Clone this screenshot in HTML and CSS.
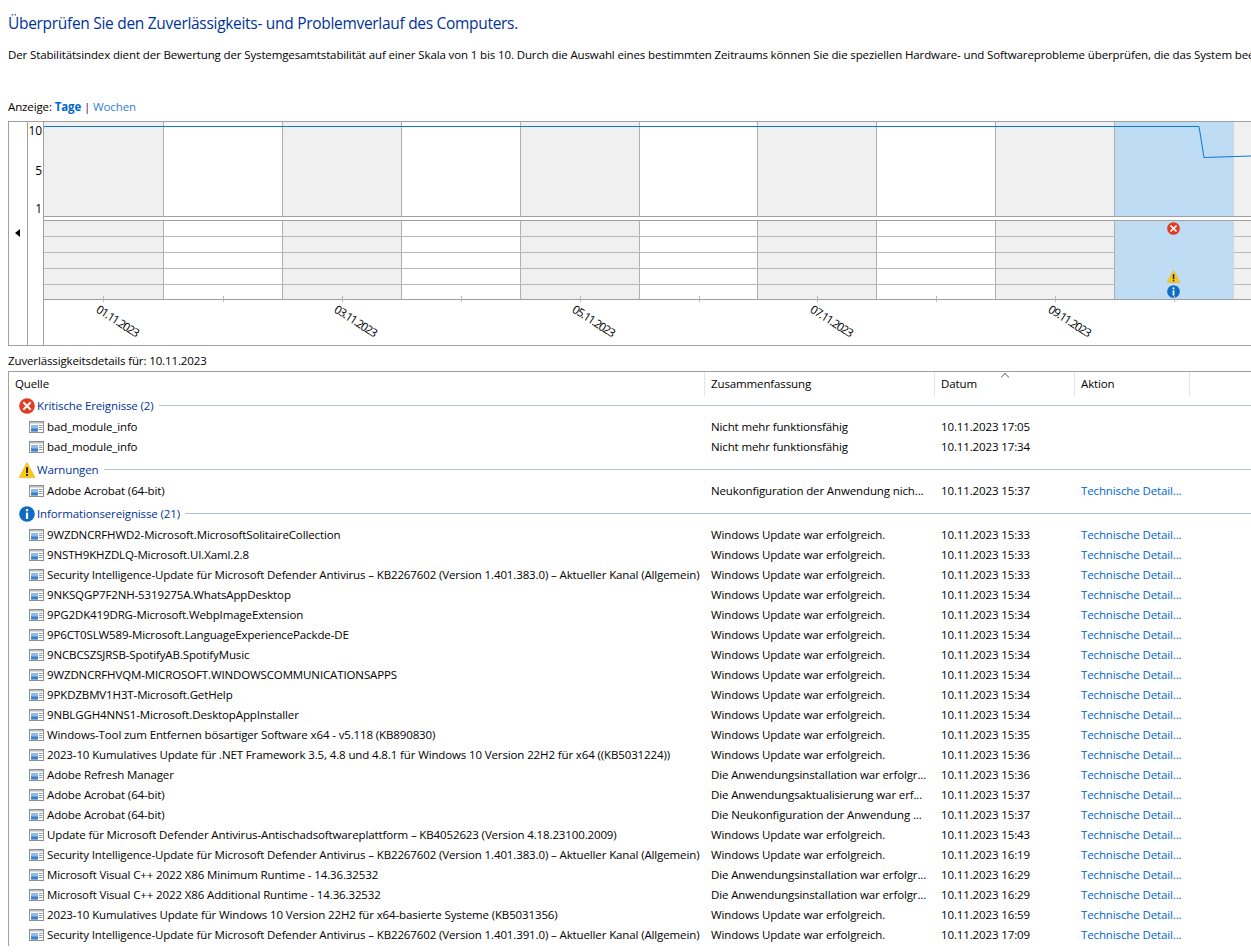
FILE: index.html
```html
<!DOCTYPE html>
<html lang="de">
<head>
<meta charset="utf-8">
<title>Zuverlässigkeitsverlauf</title>
<link rel="stylesheet" href="styles.css">
</head>
<body>
<svg class="defs" width="0" height="0" aria-hidden="true">
  <defs>
    <symbol id="i-err" viewBox="0 0 16 16"><circle cx="8" cy="8" r="7.8" fill="#e23b22"/><path d="M5 5l6 6M11 5l-6 6" stroke="#fff" stroke-width="2" stroke-linecap="square"/></symbol>
    <symbol id="i-warn" viewBox="0 0 16 16"><path d="M8 .6L15.8 15.400H.2z" fill="#fdc919" stroke="#e9a800" stroke-width=".6"/><rect x="7.1" y="5.200" width="1.900" height="5.800" fill="#222"/><rect x="7.1" y="12" width="1.900" height="1.900" fill="#222"/></symbol>
    <symbol id="i-info" viewBox="0 0 16 16"><circle cx="8" cy="8" r="7.8" fill="#0f6cc4"/><rect x="6.900" y="6.600" width="2.200" height="6.400" fill="#fff"/><rect x="6.900" y="3" width="2.200" height="2.300" fill="#fff"/></symbol>
    <symbol id="i-app" viewBox="0 0 15 12"><rect x=".5" y=".5" width="14" height="11" fill="#fff" stroke="#8f8f8f"/><rect x="1" y="1" width="13" height="1.500" fill="#bcbcbc"/><rect x="2" y="4" width="7" height="6.500" fill="#8fbbe8"/><rect x="2" y="7.500" width="7" height="3" fill="#3f7fc6"/><path d="M10 4.500h3.500M10 6.500h3.500M10 8.500h3.500" stroke="#8c9bb0"/></symbol>
  </defs>
</svg>

<h1 class="title">Überprüfen Sie den Zuverlässigkeits- und Problemverlauf des Computers.</h1>
<p class="intro">Der Stabilitätsindex dient der Bewertung der Systemgesamtstabilität auf einer Skala von 1 bis 10. Durch die Auswahl eines bestimmten Zeitraums können Sie die speziellen Hardware- und Softwareprobleme überprüfen, die das System beeinträchtigt haben.</p>
<p class="view">Anzeige: <a class="link strong">Tage</a> <span class="sep">|</span> <a class="link soft">Wochen</a></p>

<section class="chart">
  <div class="nav"><span class="arrow"></span></div>
  <div class="scale">
    <span class="tick">10</span><span class="tick">5</span><span class="tick low">1</span>
  </div>
  <div class="plot">
    <div class="index">
      <div class="day grey"></div><div class="day"></div><div class="day grey"></div><div class="day"></div><div class="day grey"></div><div class="day"></div><div class="day grey"></div><div class="day"></div><div class="day grey"></div><div class="day sel"></div><div class="day grey last"></div>
      <svg class="curve" width="1207" height="94" viewBox="0 0 1207 94"><path d="M0 4.500H1155L1160 35.500L1207 34" fill="none" stroke="#0b78d6" stroke-width="1"/></svg>
    </div>
    <div class="events">
      <div class="day grey"></div><div class="day"></div><div class="day grey"></div><div class="day"></div><div class="day grey"></div><div class="day"></div><div class="day grey"></div><div class="day"></div><div class="day grey"></div>
      <div class="day sel marks">
        <svg class="mark"><use href="#i-err"/></svg>
        <span></span>
        <span></span>
        <svg class="mark"><use href="#i-warn"/></svg>
        <svg class="mark up"><use href="#i-info"/></svg>
      </div>
      <div class="day grey last"></div>
      <div class="rules"><i></i><i></i><i></i><i></i></div>
    </div>
    <div class="dates">
      <span class="date">01.11.2023</span><span class="date">03.11.2023</span><span class="date">05.11.2023</span><span class="date">07.11.2023</span><span class="date">09.11.2023</span>
    </div>
  </div>
</section>

<p class="detail-label">Zuverlässigkeitsdetails für: 10.11.2023</p>

<section class="table">
  <div class="row head">
    <div class="cell">Quelle</div><div class="cell">Zusammenfassung</div><div class="cell sorted">Datum</div><div class="cell">Aktion</div>
  </div>

  <div class="group"><svg class="gicon"><use href="#i-err"/></svg><span>Kritische Ereignisse (2)</span><hr></div>
  <div class="row"><div class="cell src"><svg class="app"><use href="#i-app"/></svg>bad_module_info</div><div class="cell">Nicht mehr funktionsfähig</div><div class="cell">10.11.2023 17:05</div><div class="cell"></div></div>
  <div class="row"><div class="cell src"><svg class="app"><use href="#i-app"/></svg>bad_module_info</div><div class="cell">Nicht mehr funktionsfähig</div><div class="cell">10.11.2023 17:34</div><div class="cell"></div></div>

  <div class="group"><svg class="gicon"><use href="#i-warn"/></svg><span>Warnungen</span><hr></div>
  <div class="row"><div class="cell src"><svg class="app"><use href="#i-app"/></svg>Adobe Acrobat (64-bit)</div><div class="cell">Neukonfiguration der Anwendung nich...</div><div class="cell">10.11.2023 15:37</div><div class="cell link">Technische Detail...</div></div>

  <div class="group"><svg class="gicon"><use href="#i-info"/></svg><span>Informationsereignisse (21)</span><hr></div>
  <div class="row"><div class="cell src"><svg class="app"><use href="#i-app"/></svg>9WZDNCRFHWD2-Microsoft.MicrosoftSolitaireCollection</div><div class="cell">Windows Update war erfolgreich.</div><div class="cell">10.11.2023 15:33</div><div class="cell link">Technische Detail...</div></div>
  <div class="row"><div class="cell src"><svg class="app"><use href="#i-app"/></svg>9NSTH9KHZDLQ-Microsoft.UI.Xaml.2.8</div><div class="cell">Windows Update war erfolgreich.</div><div class="cell">10.11.2023 15:33</div><div class="cell link">Technische Detail...</div></div>
  <div class="row"><div class="cell src"><svg class="app"><use href="#i-app"/></svg>Security Intelligence-Update für Microsoft Defender Antivirus – KB2267602 (Version 1.401.383.0) – Aktueller Kanal (Allgemein)</div><div class="cell">Windows Update war erfolgreich.</div><div class="cell">10.11.2023 15:33</div><div class="cell link">Technische Detail...</div></div>
  <div class="row"><div class="cell src"><svg class="app"><use href="#i-app"/></svg>9NKSQGP7F2NH-5319275A.WhatsAppDesktop</div><div class="cell">Windows Update war erfolgreich.</div><div class="cell">10.11.2023 15:34</div><div class="cell link">Technische Detail...</div></div>
  <div class="row"><div class="cell src"><svg class="app"><use href="#i-app"/></svg>9PG2DK419DRG-Microsoft.WebpImageExtension</div><div class="cell">Windows Update war erfolgreich.</div><div class="cell">10.11.2023 15:34</div><div class="cell link">Technische Detail...</div></div>
  <div class="row"><div class="cell src"><svg class="app"><use href="#i-app"/></svg>9P6CT0SLW589-Microsoft.LanguageExperiencePackde-DE</div><div class="cell">Windows Update war erfolgreich.</div><div class="cell">10.11.2023 15:34</div><div class="cell link">Technische Detail...</div></div>
  <div class="row"><div class="cell src"><svg class="app"><use href="#i-app"/></svg>9NCBCSZSJRSB-SpotifyAB.SpotifyMusic</div><div class="cell">Windows Update war erfolgreich.</div><div class="cell">10.11.2023 15:34</div><div class="cell link">Technische Detail...</div></div>
  <div class="row"><div class="cell src"><svg class="app"><use href="#i-app"/></svg>9WZDNCRFHVQM-MICROSOFT.WINDOWSCOMMUNICATIONSAPPS</div><div class="cell">Windows Update war erfolgreich.</div><div class="cell">10.11.2023 15:34</div><div class="cell link">Technische Detail...</div></div>
  <div class="row"><div class="cell src"><svg class="app"><use href="#i-app"/></svg>9PKDZBMV1H3T-Microsoft.GetHelp</div><div class="cell">Windows Update war erfolgreich.</div><div class="cell">10.11.2023 15:34</div><div class="cell link">Technische Detail...</div></div>
  <div class="row"><div class="cell src"><svg class="app"><use href="#i-app"/></svg>9NBLGGH4NNS1-Microsoft.DesktopAppInstaller</div><div class="cell">Windows Update war erfolgreich.</div><div class="cell">10.11.2023 15:34</div><div class="cell link">Technische Detail...</div></div>
  <div class="row"><div class="cell src"><svg class="app"><use href="#i-app"/></svg>Windows-Tool zum Entfernen bösartiger Software x64 - v5.118 (KB890830)</div><div class="cell">Windows Update war erfolgreich.</div><div class="cell">10.11.2023 15:35</div><div class="cell link">Technische Detail...</div></div>
  <div class="row"><div class="cell src"><svg class="app"><use href="#i-app"/></svg>2023-10 Kumulatives Update für .NET Framework 3.5, 4.8 und 4.8.1 für Windows 10 Version 22H2 für x64 ((KB5031224))</div><div class="cell">Windows Update war erfolgreich.</div><div class="cell">10.11.2023 15:36</div><div class="cell link">Technische Detail...</div></div>
  <div class="row"><div class="cell src"><svg class="app"><use href="#i-app"/></svg>Adobe Refresh Manager</div><div class="cell">Die Anwendungsinstallation war erfolgr...</div><div class="cell">10.11.2023 15:36</div><div class="cell link">Technische Detail...</div></div>
  <div class="row"><div class="cell src"><svg class="app"><use href="#i-app"/></svg>Adobe Acrobat (64-bit)</div><div class="cell">Die Anwendungsaktualisierung war erf...</div><div class="cell">10.11.2023 15:37</div><div class="cell link">Technische Detail...</div></div>
  <div class="row"><div class="cell src"><svg class="app"><use href="#i-app"/></svg>Adobe Acrobat (64-bit)</div><div class="cell">Die Neukonfiguration der Anwendung ...</div><div class="cell">10.11.2023 15:37</div><div class="cell link">Technische Detail...</div></div>
  <div class="row"><div class="cell src"><svg class="app"><use href="#i-app"/></svg>Update für Microsoft Defender Antivirus-Antischadsoftwareplattform – KB4052623 (Version 4.18.23100.2009)</div><div class="cell">Windows Update war erfolgreich.</div><div class="cell">10.11.2023 15:43</div><div class="cell link">Technische Detail...</div></div>
  <div class="row"><div class="cell src"><svg class="app"><use href="#i-app"/></svg>Security Intelligence-Update für Microsoft Defender Antivirus – KB2267602 (Version 1.401.383.0) – Aktueller Kanal (Allgemein)</div><div class="cell">Windows Update war erfolgreich.</div><div class="cell">10.11.2023 16:19</div><div class="cell link">Technische Detail...</div></div>
  <div class="row"><div class="cell src"><svg class="app"><use href="#i-app"/></svg>Microsoft Visual C++ 2022 X86 Minimum Runtime - 14.36.32532</div><div class="cell">Die Anwendungsinstallation war erfolgr...</div><div class="cell">10.11.2023 16:29</div><div class="cell link">Technische Detail...</div></div>
  <div class="row"><div class="cell src"><svg class="app"><use href="#i-app"/></svg>Microsoft Visual C++ 2022 X86 Additional Runtime - 14.36.32532</div><div class="cell">Die Anwendungsinstallation war erfolgr...</div><div class="cell">10.11.2023 16:29</div><div class="cell link">Technische Detail...</div></div>
  <div class="row"><div class="cell src"><svg class="app"><use href="#i-app"/></svg>2023-10 Kumulatives Update für Windows 10 Version 22H2 für x64-basierte Systeme (KB5031356)</div><div class="cell">Windows Update war erfolgreich.</div><div class="cell">10.11.2023 16:59</div><div class="cell link">Technische Detail...</div></div>
  <div class="row"><div class="cell src"><svg class="app"><use href="#i-app"/></svg>Security Intelligence-Update für Microsoft Defender Antivirus – KB2267602 (Version 1.401.391.0) – Aktueller Kanal (Allgemein)</div><div class="cell">Windows Update war erfolgreich.</div><div class="cell">10.11.2023 17:09</div><div class="cell link">Technische Detail...</div></div>
</section>
</body>
</html>
```
FILE: styles.css
```css
html, body {
  margin: 0;
  height: 952px;
  overflow: hidden;
  background: #fff;
}
body {
  padding: 0 0 0 8px;
  box-sizing: border-box;
  width: 1251px;
  font: 11.5px/16px "Open Sans", "Noto Sans", sans-serif;
  color: #000;
  letter-spacing: -0.125px;
}
.defs { position: absolute; }
.title {
  margin: 0;
  padding-top: 13px;
  font-size: 15.5px;
  line-height: 21px;
  font-weight: 400;
  color: #003399;
  letter-spacing: -0.3px;
  white-space: nowrap;
}
.intro {
  margin: 13px 0 0;
  white-space: nowrap;
}
.view { margin: 36px 0 0; }
.link { color: #0066cc; }
.soft { color: #2f80d8; }
.strong { font-weight: 700; }
.sep { color: #500060; }

.chart {
  display: flex;
  margin-top: 6px;
  height: 225px;
  box-sizing: border-box;
  border: 1px solid #a0a0a0;
  border-right: 0;
  overflow: hidden;
}
.nav {
  width: 19px;
  flex: none;
  border-right: 1px solid #a0a0a0;
  display: flex;
  justify-content: center;
  padding-top: 107px;
  box-sizing: border-box;
}
.arrow {
  width: 0;
  height: 0;
  border: 4px solid transparent;
  border-left: 0;
  border-right: 5px solid #000;
  margin-right: 1px;
}
.scale {
  width: 16px;
  flex: none;
  border-right: 1px solid #a0a0a0;
  display: flex;
  flex-direction: column;
  align-items: flex-end;
  padding: 1px 1px 0 0;
  box-sizing: border-box;
  gap: 24px;
  font-size: 12px;
}
.tick { display: block; }
.low { margin-top: -2px; }
.plot { flex: 1; min-width: 0; }
.index, .events { display: flex; position: relative; }
.index {
  height: 94px;
  border-bottom: 1px solid #a0a0a0;
}
.events {
  margin-top: 3px;
  height: 78px;
  border-top: 1px solid #a0a0a0;
  border-bottom: 1px solid #a0a0a0;
}
.day {
  flex: none;
  width: 117.82px;
  border-right: 1px solid #b0b0b0;
  background: #fff;
  position: relative;
}
.day:first-child { width: 119.3px; }
.events .day::after {
  content: "";
  position: absolute;
  left: 59px;
  bottom: -3px;
  width: 1px;
  height: 6px;
  background: #b8b8b8;
}
.grey { background: #f0f0f0; }
.sel { background: #bfdcf5; border-right-color: #d0d4d8; }
.last { border-right: 0; }
.curve { position: absolute; left: 0; top: 0; }
.marks {
  display: grid;
  grid-auto-rows: 16px;
  justify-items: center;
  align-items: center;
  z-index: 1;
}
.mark { width: 13px; height: 13px; margin: -2px 1px 0 0; }
.mark.up { margin-top: -4px; }
.rules {
  position: absolute;
  inset: 0;
  pointer-events: none;
}
.rules i {
  display: block;
  height: 15px;
  border-bottom: 1px solid #b8b8b8;
}
.dates {
  display: flex;
  height: 45px;
  overflow: hidden;
}
.date {
  flex: none;
  width: 119px;
  height: 16px;
  margin: 13px 105px 0 14px;
  text-align: center;
  font-size: 11.5px;
  letter-spacing: -1.1px;
  transform: rotate(33deg);
  white-space: nowrap;
}
.detail-label { margin: 7px 0 0; }

.table {
  margin-top: 2px;
  border-top: 1px solid #a0a0a0;
  border-left: 1px solid #a0a0a0;
}
.row {
  display: grid;
  grid-template-columns: 696px 230px 140px 115px;
  height: 20px;
  line-height: 18px;
  white-space: nowrap;
}
.cell { overflow: hidden; padding-left: 6px; box-sizing: border-box; }
.src { display: flex; align-items: flex-start; padding-left: 20px; gap: 3px; }
.head { height: 22px; line-height: 24px; }
.head .cell { border-right: 1px solid #e5e5e5; height: 24px; position: relative; }
.sorted::before {
  content: "";
  position: absolute;
  left: 67px;
  top: 2px;
  width: 5px;
  height: 5px;
  border-top: 1px solid #888;
  border-left: 1px solid #888;
  transform: rotate(45deg);
}
.app { width: 15px; height: 12px; flex: none; margin-top: 3px; }
.group {
  display: flex;
  align-items: center;
  height: 24px;
  padding-left: 10px;
  color: #003399;
  white-space: nowrap;
}
.gicon { width: 16px; height: 16px; flex: none; margin-right: 2px; }
.group hr {
  flex: 1;
  margin: 0 0 2px 5px;
  border: 0;
  border-top: 1px solid #b5c0dc;
}
```
